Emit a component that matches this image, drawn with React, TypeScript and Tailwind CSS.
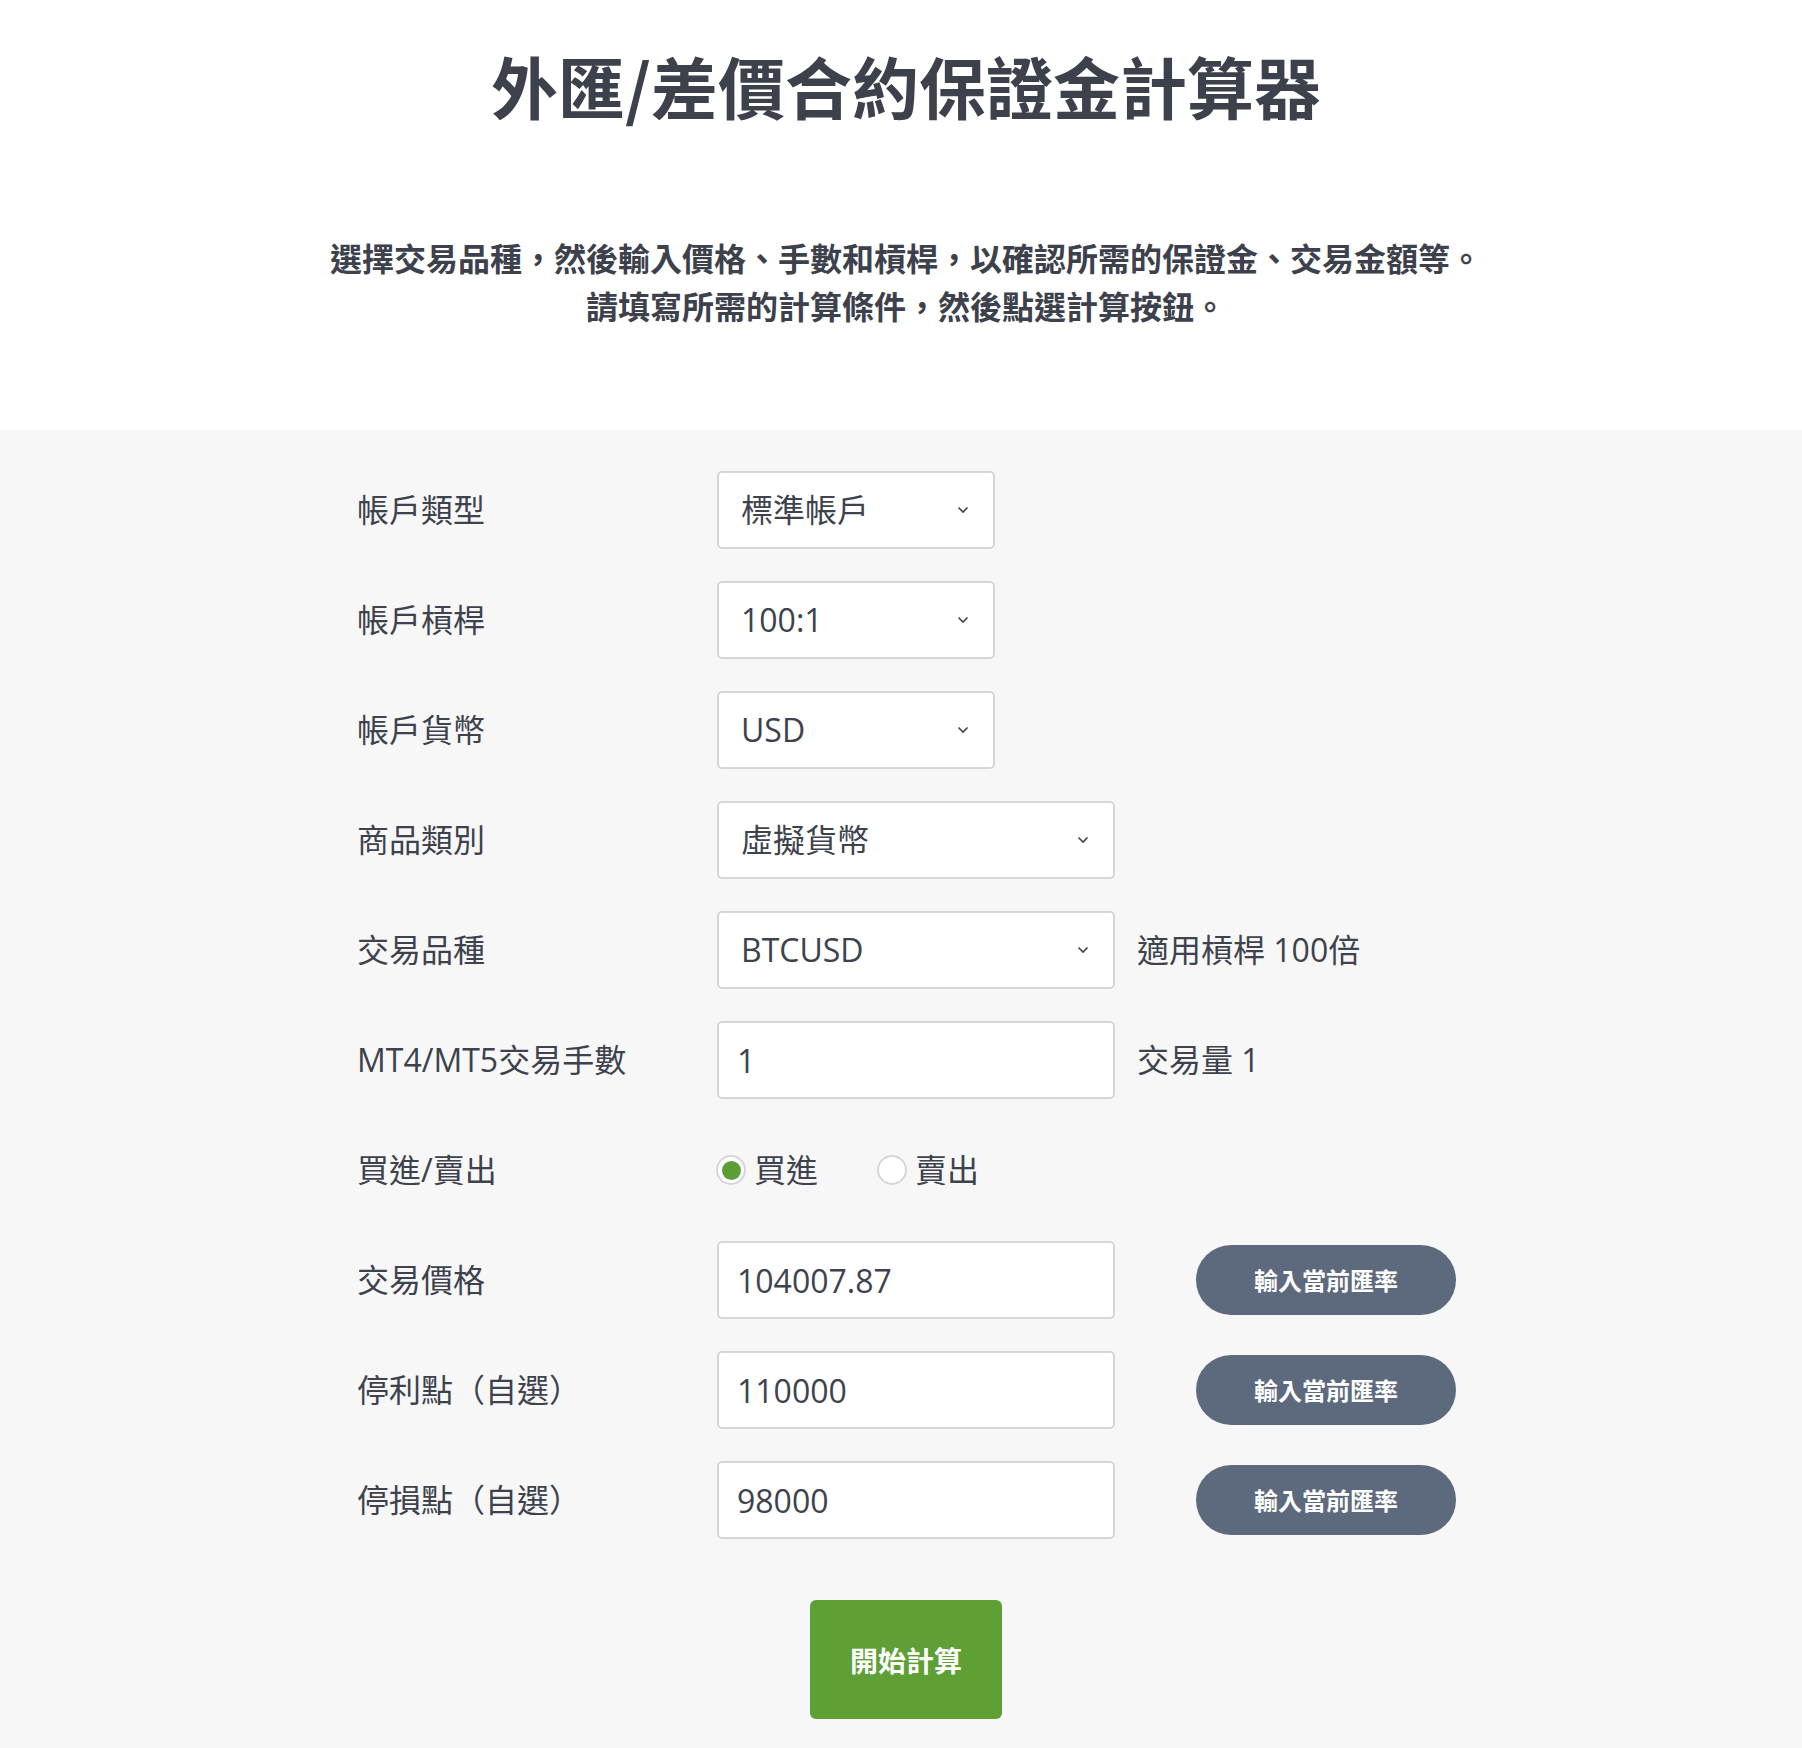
import { useState } from "react";

const bodyFont = "font-['Open_Sans','Noto_Sans_CJK_TC',sans-serif]";
const cjkFont = "font-['Noto_Sans_CJK_TC','Noto_Sans',sans-serif]";
const boxClass =
  "h-[78px] rounded-[5px] border-2 border-[#d6d6d6] bg-white text-[32px] text-[#3d424d] outline-none " + bodyFont;

function Chevron() {
  return (
    <svg
      width="12"
      height="8"
      viewBox="0 0 12 8"
      className="pointer-events-none absolute right-[26px] top-1/2 -translate-y-1/2"
    >
      <polyline points="1.5,1.5 6,6 10.5,1.5" fill="none" stroke="#3d424d" strokeWidth="1.6" />
    </svg>
  );
}

function Select({ value, options, wide }: { value: string; options: string[]; wide?: boolean }) {
  const [v, setV] = useState(value);
  return (
    <div className={"relative " + (wide ? "w-[398px]" : "w-[278px]")}>
      <select
        value={v}
        onChange={(e) => setV(e.target.value)}
        className={boxClass + " w-full appearance-none pl-[22px] pr-[50px]"}
      >
        {options.map((o) => (
          <option key={o}>{o}</option>
        ))}
      </select>
      <Chevron />
    </div>
  );
}

function Input({ value }: { value: string }) {
  return <input defaultValue={value} className={boxClass + " w-[398px] pl-[18px]"} />;
}

function Row({ label, children }: { label: string; children: React.ReactNode }) {
  return (
    <div className="grid h-[78px] grid-cols-[360px_1fr] items-center">
      <div className="text-[32px] text-[#3d424d]">{label}</div>
      <div className="flex items-center">{children}</div>
    </div>
  );
}

function RateButton() {
  return (
    <button
      className={
        "ml-[81px] h-[70px] w-[260px] rounded-full bg-[#5d6a7e] text-[24px] font-bold text-white " + cjkFont
      }
    >
      輸入當前匯率
    </button>
  );
}

function Radio({ checked, label, onClick }: { checked: boolean; label: string; onClick: () => void }) {
  return (
    <label className="flex cursor-pointer items-center gap-[8px]" onClick={onClick}>
      <span className="flex h-[30px] w-[30px] items-center justify-center rounded-full border-2 border-[#d6d6d6] bg-white">
        {checked ? <span className="h-[19px] w-[19px] rounded-full bg-[#5b9e35]" /> : null}
      </span>
      <span className="text-[32px] text-[#3d424d]">{label}</span>
    </label>
  );
}

export default function App() {
  const [side, setSide] = useState("buy");

  return (
    <div className={"min-h-[1748px] bg-white " + bodyFont}>
      <header className={"pt-[44px] pb-[101px] pl-[10px] text-center text-[#3d414c] " + cjkFont}>
        <h1 className="text-[67px] font-bold leading-[82px]">外匯/差價合約保證金計算器</h1>
        <p className="mt-[107px] text-[32px] font-bold leading-[48px]">
          選擇交易品種，然後輸入價格、手數和槓桿，以確認所需的保證金、交易金額等。
          <br />
          請填寫所需的計算條件，然後點選計算按鈕。
        </p>
      </header>

      <section className="h-[1318px] bg-[#f7f7f7] pt-[41px]">
        <div className="mx-auto flex w-[1100px] flex-col gap-[32px] pl-[6px]">
          <Row label="帳戶類型">
            <Select value="標準帳戶" options={["標準帳戶", "零點差帳戶"]} />
          </Row>
          <Row label="帳戶槓桿">
            <Select value="100:1" options={["100:1", "200:1", "500:1"]} />
          </Row>
          <Row label="帳戶貨幣">
            <Select value="USD" options={["USD", "EUR", "JPY"]} />
          </Row>
          <Row label="商品類別">
            <Select wide value="虛擬貨幣" options={["外匯", "虛擬貨幣", "指數"]} />
          </Row>
          <Row label="交易品種">
            <Select wide value="BTCUSD" options={["BTCUSD", "ETHUSD"]} />
            <span className="ml-[22px] text-[32px] text-[#3d424d]">適用槓桿 100倍</span>
          </Row>
          <Row label="MT4/MT5交易手數">
            <Input value="1" />
            <span className="ml-[22px] text-[32px] text-[#3d424d]">交易量 1</span>
          </Row>
          <Row label="買進/賣出">
            <div className="-ml-[1px] flex items-center gap-[59px]">
              <Radio checked={side === "buy"} label="買進" onClick={() => setSide("buy")} />
              <Radio checked={side === "sell"} label="賣出" onClick={() => setSide("sell")} />
            </div>
          </Row>
          <Row label="交易價格">
            <Input value="104007.87" />
            <RateButton />
          </Row>
          <Row label="停利點（自選）">
            <Input value="110000" />
            <RateButton />
          </Row>
          <Row label="停損點（自選）">
            <Input value="98000" />
            <RateButton />
          </Row>
        </div>

        <div className="mt-[61px] flex justify-center pl-[10px]">
          <button
            className={
              "h-[119px] w-[192px] rounded-[6px] bg-[#5ea036] text-[28px] font-bold text-white " + cjkFont
            }
          >
            開始計算
          </button>
        </div>
      </section>
    </div>
  );
}
